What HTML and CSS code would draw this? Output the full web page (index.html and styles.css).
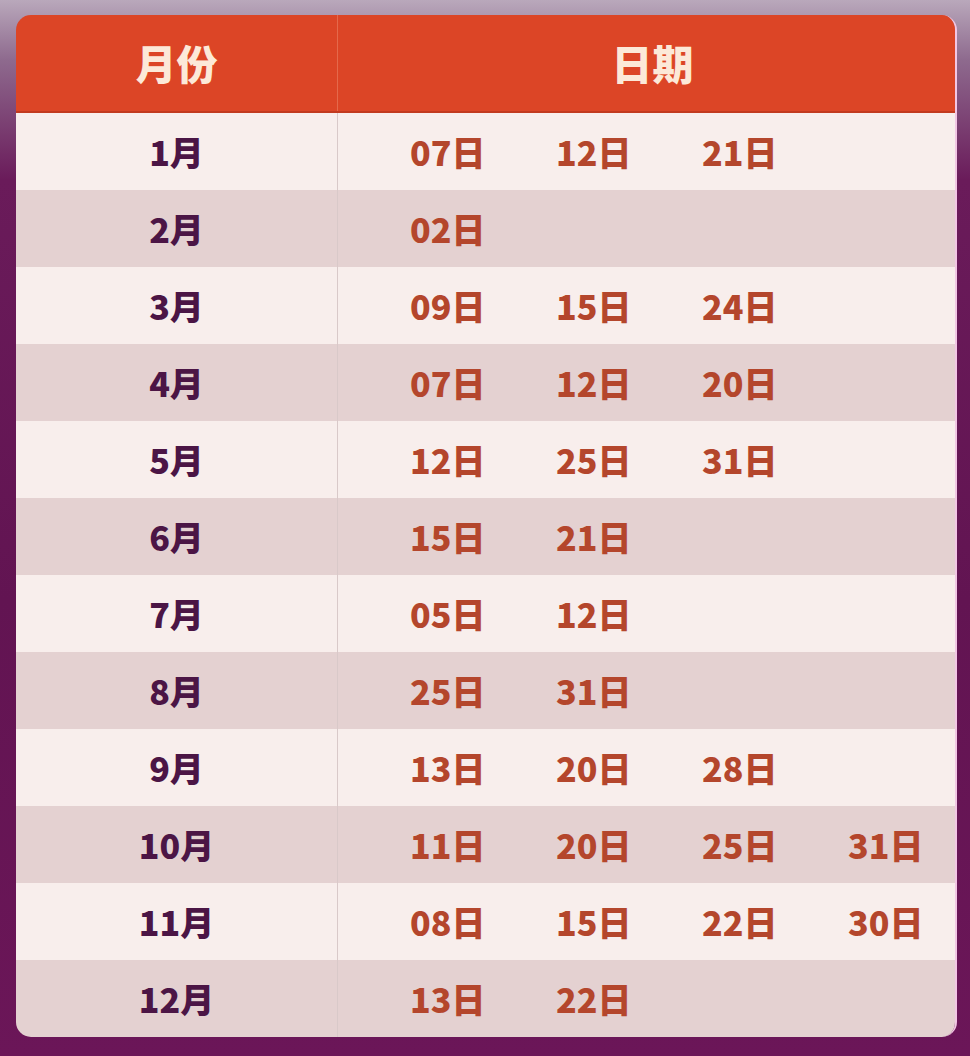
FILE: index.html
```html
<!DOCTYPE html>
<html lang="zh">
<head>
<meta charset="utf-8">
<title>月份日期</title>
<link rel="stylesheet" href="styles.css">
</head>
<body>
<div class="table">
  <div class="row head">
    <div class="month">月份</div>
    <div class="dates">日期</div>
  </div>
  <div class="row light"><div class="month">1月</div><div class="dates"><span>07日</span><span>12日</span><span>21日</span></div></div>
  <div class="row dark"><div class="month">2月</div><div class="dates"><span>02日</span></div></div>
  <div class="row light"><div class="month">3月</div><div class="dates"><span>09日</span><span>15日</span><span>24日</span></div></div>
  <div class="row dark"><div class="month">4月</div><div class="dates"><span>07日</span><span>12日</span><span>20日</span></div></div>
  <div class="row light"><div class="month">5月</div><div class="dates"><span>12日</span><span>25日</span><span>31日</span></div></div>
  <div class="row dark"><div class="month">6月</div><div class="dates"><span>15日</span><span>21日</span></div></div>
  <div class="row light"><div class="month">7月</div><div class="dates"><span>05日</span><span>12日</span></div></div>
  <div class="row dark"><div class="month">8月</div><div class="dates"><span>25日</span><span>31日</span></div></div>
  <div class="row light"><div class="month">9月</div><div class="dates"><span>13日</span><span>20日</span><span>28日</span></div></div>
  <div class="row dark"><div class="month">10月</div><div class="dates"><span>11日</span><span>20日</span><span>25日</span><span>31日</span></div></div>
  <div class="row light"><div class="month">11月</div><div class="dates"><span>08日</span><span>15日</span><span>22日</span><span>30日</span></div></div>
  <div class="row dark"><div class="month">12月</div><div class="dates"><span>13日</span><span>22日</span></div></div>
</div>
</body>
</html>
```
FILE: styles.css
```css
html, body {
  margin: 0;
  padding: 0;
}
body {
  width: 970px;
  height: 1056px;
  overflow: hidden;
  background: linear-gradient(180deg, #b9a8bb 0px, #8e6a8e 60px, #6a1b5a 180px, #621452 600px, #6b1658 1056px);
  font-family: "Noto Sans CJK SC", "Noto Sans", sans-serif;
  font-weight: 900;
  padding-top: 15px;
  box-sizing: border-box;
}
.table {
  margin-left: 16px;
  width: 941px;
  border-radius: 15px;
  overflow: hidden;
  border-right: 2px solid #f2c6e4;
  box-sizing: border-box;
}
.row {
  display: grid;
  grid-template-columns: 322px 1fr;
  height: 77px;
}
.row.head {
  height: 98px;
  background: #dc4526;
  border-bottom: 2px solid #c23a1f;
  box-sizing: border-box;
}
.month {
  display: flex;
  align-items: center;
  justify-content: center;
  border-right: 1px solid #d9c9c9;
  font-size: 34px;
  color: #4b1545;
}
.head .month {
  border-right: 1px solid #e5694b;
  color: #fce9d8;
  font-size: 41px;
  padding-bottom: 2px;
}
.dates {
  display: grid;
  grid-template-columns: repeat(4, 146px);
  align-items: center;
  padding-left: 72px;
  font-size: 34px;
  color: #b4462c;
}
.head .dates {
  display: flex;
  justify-content: center;
  padding-left: 12px;
  color: #fce9d8;
  font-size: 41px;
  padding-bottom: 2px;
}
.light {
  background: #f8eeec;
}
.dark {
  background: #e4d1d1;
}
```
